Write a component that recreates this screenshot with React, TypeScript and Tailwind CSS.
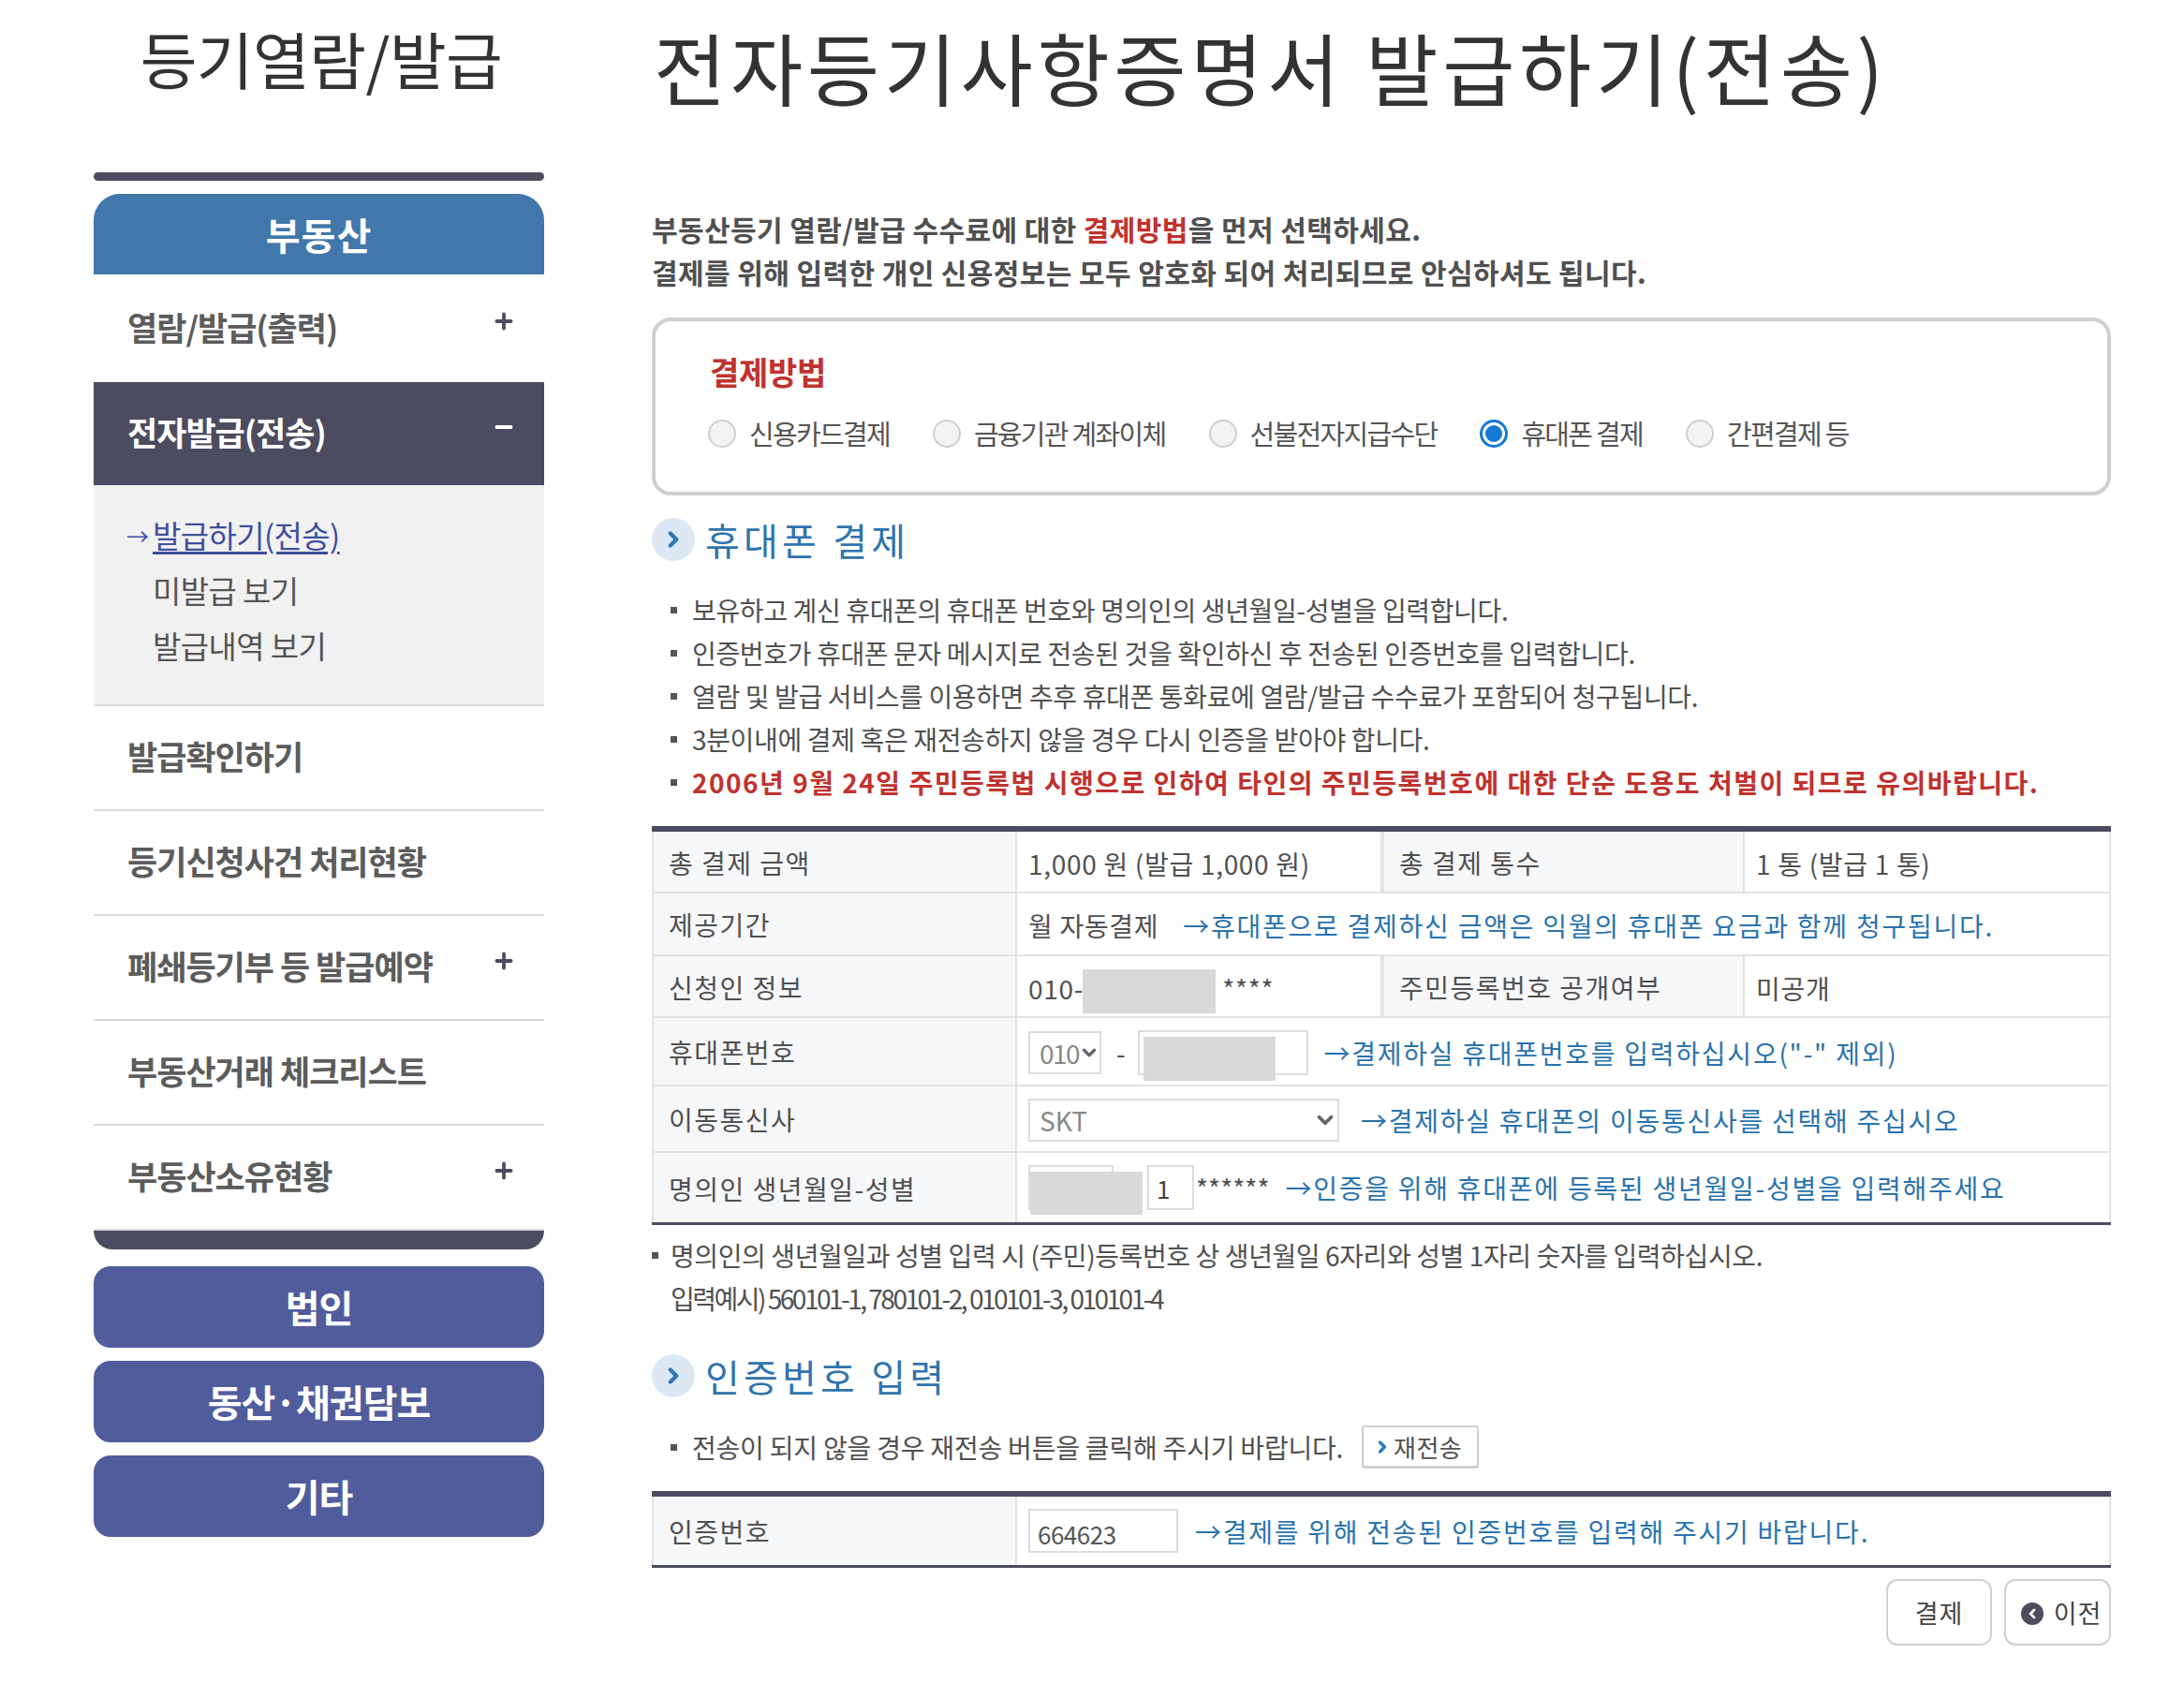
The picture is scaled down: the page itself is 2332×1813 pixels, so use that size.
import React from 'react';
import { Plus, Minus, ChevronRight, ChevronLeft, ChevronDown } from 'lucide-react';

const FONT = "font-['Noto_Sans_CJK_KR','Noto_Sans',sans-serif]";

const MenuRow: React.FC<{ label: string; plus?: boolean; tall?: boolean }> = ({ label, plus, tall }) => (
  <div className={`flex items-center justify-between border-b-2 border-[#d9d9d9] pl-[36px] pr-[30px] last:border-b-0 ${tall ? 'h-[117px]' : 'h-[112px]'}`}>
    <span className="mb-[3px] text-[35px] font-bold tracking-[-1px] text-[#5c5c5c]">{label}</span>
    {plus && <Plus size={26} strokeWidth={3.5} className="mb-[15px] text-[#4c4c60]" />}
  </div>
);

const SideButton: React.FC<{ label: string }> = ({ label }) => (
  <div className="flex h-[87px] items-center justify-center rounded-[18px] bg-[#505c9c] pb-[2px] text-[40px] font-bold tracking-[-1px] text-white">
    {label}
  </div>
);

const Sidebar = () => (
  <aside className="w-[481px] shrink-0">
    <h2 className="mb-[74px] mt-[12px] h-[98px] pl-[5px] text-center text-[66px] font-normal leading-[98px] tracking-[-0.5px] text-[#333]">
      등기열람/발급
    </h2>
    <div className="h-[9px] rounded-full bg-[#4c4c60]" />
    <div className="mt-[14px] flex h-[86px] items-center justify-center rounded-t-[28px] bg-[#4277ab] text-[40px] font-bold tracking-[1px] text-white">
      부동산
    </div>
    <MenuRow label="열람/발급(출력)" plus tall />
    <div className="-mt-[2px] flex h-[110px] items-center justify-between bg-[#4c4c60] pl-[36px] pr-[30px]">
      <span className="mb-[3px] text-[35px] font-bold tracking-[-1px] text-white">전자발급(전송)</span>
      <Minus size={26} strokeWidth={3.5} className="mb-[15px] text-white" />
    </div>
    <div className="flex h-[236px] flex-col border-b-2 border-[#d9d9d9] bg-[#f1f1f1] pl-[35px] pt-[24px] text-[33px] leading-[59px] tracking-[-0.6px] text-[#555]">
      <div className="flex items-center">
        <span className="w-[28px] text-[24px] text-[#3f4f9e]">→</span>
        <span className="text-[#3f4f9e] underline underline-offset-4">발급하기(전송)</span>
      </div>
      <div className="pl-[28px]">미발급 보기</div>
      <div className="pl-[28px]">발급내역 보기</div>
    </div>
    <MenuRow label="발급확인하기" />
    <MenuRow label="등기신청사건 처리현황" />
    <MenuRow label="폐쇄등기부 등 발급예약" plus />
    <MenuRow label="부동산거래 체크리스트" />
    <MenuRow label="부동산소유현황" plus />
    <div className="h-[20px] rounded-b-[28px] bg-[#4c4c60]" />
    <div className="mt-[18px] flex flex-col gap-[14px]">
      <SideButton label="법인" />
      <SideButton label="동산·채권담보" />
      <SideButton label="기타" />
    </div>
  </aside>
);

const Radio: React.FC<{ label: string; checked?: boolean }> = ({ label, checked }) => (
  <div className="flex items-center gap-[14px]">
    {checked ? (
      <span className="flex h-[30px] w-[30px] items-center justify-center rounded-full border-[3px] border-[#1478d4] bg-white">
        <span className="h-[18px] w-[18px] rounded-full bg-[#1478d4]" />
      </span>
    ) : (
      <span className="h-[30px] w-[30px] rounded-full border-2 border-[#cfcfcf] bg-[#f3f3f3]" />
    )}
    <span className="text-[29px] tracking-[-1.7px] text-[#555]">{label}</span>
  </div>
);

const SectionTitle: React.FC<{ label: string }> = ({ label }) => (
  <div className="flex items-center gap-[11px]">
    <span className="flex h-[46px] w-[46px] items-center justify-center rounded-full bg-[#dce8f3]">
      <ChevronRight size={26} strokeWidth={4} className="text-[#2f79b9]" />
    </span>
    <span className="text-[40px] leading-[46px] tracking-[4.2px] text-[#2f73ad]">{label}</span>
  </div>
);

const Bullet: React.FC<{ children: React.ReactNode; red?: boolean }> = ({ children, red }) => (
  <li className={`flex items-center pl-[20px] text-[28px] leading-[46px] ${red ? 'font-bold tracking-[1.5px] text-[#c0322e]' : 'tracking-[-0.35px] text-[#505050]'}`}>
    <span className="mr-[16px] h-[7px] w-[7px] shrink-0 bg-[#555]" />
    {children}
  </li>
);

const Th: React.FC<{ children: React.ReactNode }> = ({ children }) => (
  <th className="border-r-2 border-b-2 border-l-2 border-[#e3e3e3] bg-[#f6f7f9] pl-[16px] pt-[1px] text-left text-[28px] font-normal tracking-[1.5px] text-[#505050]">
    {children}
  </th>
);

const Td: React.FC<{ children: React.ReactNode; colSpan?: number }> = ({ children, colSpan }) => (
  <td colSpan={colSpan} className="relative border-r-2 border-b-2 border-[#e3e3e3] pl-[12px] pt-[3px] text-[28px] tracking-[0.7px] text-[#505050]">
    {children}
  </td>
);

const Hint: React.FC<{ children: React.ReactNode }> = ({ children }) => (
  <span className="text-[28px] tracking-[1.75px] text-[#2a73ad]">→{children}</span>
);

const SelectBox: React.FC<{ value: string; className: string; chevron: number }> = ({ value, className, chevron }) => (
  <span className={`flex h-[46px] items-center justify-between overflow-hidden border-2 border-[#dcdcdc] bg-white pl-[10px] text-[28px] text-[#888] ${className}`}>
    {value}
    <ChevronDown size={chevron} strokeWidth={3.5} className="shrink-0 text-[#666]" />
  </span>
);

const Block: React.FC<{ className: string }> = ({ className }) => <span className={`absolute bg-[#d9d9d9] ${className}`} />;

const Main = () => (
  <main className="ml-[115px] w-[1558px] shrink-0">
    <h1 className="ml-[2px] mt-[16px] h-[110px] text-[84px] font-normal leading-[110px] tracking-[4.6px] text-[#333]">
      전자등기사항증명서 발급하기(전송)
    </h1>

    <div className="mt-[95px] text-[30px] font-bold leading-[46px] tracking-[0.4px] text-[#505050]">
      <p>
        부동산등기 열람/발급 수수료에 대한 <span className="text-[#c0322e]">결제방법</span>을 먼저 선택하세요.
      </p>
      <p>결제를 위해 입력한 개인 신용정보는 모두 암호화 되어 처리되므로 안심하셔도 됩니다.</p>
    </div>

    <section className="mt-[26px] h-[190px] rounded-[20px] border-4 border-[#cfcfcf] pl-[58px] pt-[28px]">
      <div className="text-[34px] font-bold tracking-[-0.3px] text-[#c0322e]">결제방법</div>
      <div className="-ml-[2px] mt-[19px] flex items-center gap-[46px]">
        <Radio label="신용카드결제" />
        <Radio label="금융기관 계좌이체" />
        <Radio label="선불전자지급수단" />
        <Radio label="휴대폰 결제" checked />
        <Radio label="간편결제 등" />
      </div>
    </section>

    <div className="mt-[24px]">
      <SectionTitle label="휴대폰 결제" />
    </div>

    <ul className="mt-[29px]">
      <Bullet>보유하고 계신 휴대폰의 휴대폰 번호와 명의인의 생년월일-성별을 입력합니다.</Bullet>
      <Bullet>인증번호가 휴대폰 문자 메시지로 전송된 것을 확인하신 후 전송된 인증번호를 입력합니다.</Bullet>
      <Bullet>열람 및 발급 서비스를 이용하면 추후 휴대폰 통화료에 열람/발급 수수료가 포함되어 청구됩니다.</Bullet>
      <Bullet>3분이내에 결제 혹은 재전송하지 않을 경우 다시 인증을 받아야 합니다.</Bullet>
      <Bullet red>2006년 9월 24일 주민등록법 시행으로 인하여 타인의 주민등록번호에 대한 단순 도용도 처벌이 되므로 유의바랍니다.</Bullet>
    </ul>

    <table className="mt-[24px] w-full table-fixed border-separate border-spacing-0 border-t-[6px] border-b-[3px] border-[#4c4c60]">
      <colgroup>
        <col className="w-[390px]" />
        <col className="w-[390px]" />
        <col className="w-[387px]" />
        <col className="w-[391px]" />
      </colgroup>
      <tbody>
        <tr className="h-[66px]">
          <Th>총 결제 금액</Th>
          <Td>1,000 원 (발급 1,000 원)</Td>
          <Th>총 결제 통수</Th>
          <Td>1 통 (발급 1 통)</Td>
        </tr>
        <tr className="h-[67px]">
          <Th>제공기간</Th>
          <Td colSpan={3}>
            월 자동결제 <span className="ml-[19px]" />
            <Hint>휴대폰으로 결제하신 금액은 익월의 휴대폰 요금과 함께 청구됩니다.</Hint>
          </Td>
        </tr>
        <tr className="h-[66px]">
          <Th>신청인 정보</Th>
          <Td>
            010-
            <span className="ml-[148px]">****</span>
            <Block className="left-[70px] top-[14px] h-[47px] w-[142px]" />
          </Td>
          <Th>주민등록번호 공개여부</Th>
          <Td>미공개</Td>
        </tr>
        <tr className="h-[73px]">
          <Th>휴대폰번호</Th>
          <Td colSpan={3}>
            <div className="flex items-center">
              <SelectBox value="010" chevron={22} className="w-[78px] tracking-[-1.5px]" />
              <span className="ml-[16px] mr-[13px]">-</span>
              <span className="h-[48px] w-[182px] border-2 border-[#dcdcdc]" />
              <span className="ml-[16px]">
                <Hint>결제하실 휴대폰번호를 입력하십시오("-" 제외)</Hint>
              </span>
            </div>
            <Block className="left-[135px] top-[20px] h-[47px] w-[141px]" />
          </Td>
        </tr>
        <tr className="h-[71px]">
          <Th>이동통신사</Th>
          <Td colSpan={3}>
            <div className="flex items-center">
              <SelectBox value="SKT" chevron={26} className="w-[332px] tracking-[0px]" />
              <span className="ml-[23px]">
                <Hint>결제하실 휴대폰의 이동통신사를 선택해 주십시오</Hint>
              </span>
            </div>
          </Td>
        </tr>
        <tr className="h-[74px]">
          <th className="border-x-2 border-[#e3e3e3] bg-[#f6f7f9] pl-[16px] pt-[1px] text-left text-[28px] font-normal tracking-[1.5px] text-[#505050]">
            명의인 생년월일-성별
          </th>
          <td colSpan={3} className="relative border-r-2 border-[#e3e3e3] pl-[12px] text-[28px] text-[#505050]">
            <div className="flex items-center">
              <span className="h-[48px] w-[91px] border-2 border-[#dcdcdc]" />
              <input
                readOnly
                value="1"
                className="ml-[36px] h-[48px] w-[50px] border-2 border-[#dcdcdc] pl-[8px] text-[26px] text-[#444]"
              />
              <span className="ml-[2px] mr-[17px]">******</span>
              <Hint>인증을 위해 휴대폰에 등록된 생년월일-성별을 입력해주세요</Hint>
            </div>
            <Block className="left-[14px] top-[20px] h-[46px] w-[120px]" />
          </td>
        </tr>
      </tbody>
    </table>

    <div className="mt-[9px] text-[28px] leading-[46px] text-[#505050]">
      <p className="flex items-center tracking-[-0.4px]">
        <span className="mr-[13px] h-[7px] w-[7px] bg-[#555]" />
        명의인의 생년월일과 성별 입력 시 (주민)등록번호 상 생년월일 6자리와 성별 1자리 숫자를 입력하십시오.
      </p>
      <p className="pl-[20px] tracking-[-2.5px]">입력예시) 560101-1, 780101-2, 010101-3, 010101-4</p>
    </div>

    <div className="mt-[37px]">
      <SectionTitle label="인증번호 입력" />
    </div>

    <div className="mt-[30px] flex items-center pl-[20px] text-[28px] tracking-[-0.2px] text-[#505050]">
      <span className="mr-[16px] h-[7px] w-[7px] bg-[#555]" />
      전송이 되지 않을 경우 재전송 버튼을 클릭해 주시기 바랍니다.
      <span className="ml-[20px] flex h-[46px] w-[125px] items-center justify-center gap-[2px] rounded-[3px] border-2 border-b-[3px] border-[#cfcfcf] text-[26px] tracking-[0.5px]">
        <ChevronRight size={20} strokeWidth={4} className="-ml-[6px] text-[#2f79b9]" />
        재전송
      </span>
    </div>

    <table className="mt-[24px] w-full table-fixed border-separate border-spacing-0 border-t-[6px] border-b-[3px] border-[#4c4c60]">
      <colgroup>
        <col className="w-[390px]" />
        <col />
      </colgroup>
      <tbody>
        <tr className="h-[73px]">
          <th className="border-x-2 border-[#e3e3e3] bg-[#f6f7f9] pl-[16px] pt-[1px] text-left text-[28px] font-normal tracking-[1.5px] text-[#505050]">
            인증번호
          </th>
          <td className="border-r-2 border-[#e3e3e3] pl-[12px]">
            <div className="flex items-center">
              <input readOnly value="664623" className="h-[47px] w-[160px] border-2 border-[#dcdcdc] pl-[8px] pt-[6px] text-[26px] tracking-[-0.5px] text-[#555]" />
              <span className="ml-[18px]">
                <Hint>결제를 위해 전송된 인증번호를 입력해 주시기 바랍니다.</Hint>
              </span>
            </div>
          </td>
        </tr>
      </tbody>
    </table>

    <div className="mt-[12px] flex justify-end gap-[13px]">
      <span className="flex h-[71px] w-[113px] items-center justify-center rounded-[12px] border-2 border-[#d0d0d0] pt-[2px] text-[27px] tracking-[1px] text-[#444]">
        결제
      </span>
      <span className="flex h-[71px] w-[114px] items-center justify-center gap-[11px] rounded-[12px] border-2 border-[#d0d0d0] pl-[8px] pt-[2px] text-[27px] tracking-[1px] text-[#444]">
        <span className="flex h-[24px] w-[24px] shrink-0 items-center justify-center rounded-full bg-[#4c4c5a]">
          <ChevronLeft size={16} strokeWidth={4} className="text-white" />
        </span>
        이전
      </span>
    </div>
  </main>
);

export default function App() {
  return (
    <div className={`flex h-[1813px] w-[2332px] overflow-hidden bg-white pl-[100px] ${FONT}`}>
      <Sidebar />
      <Main />
    </div>
  );
}
